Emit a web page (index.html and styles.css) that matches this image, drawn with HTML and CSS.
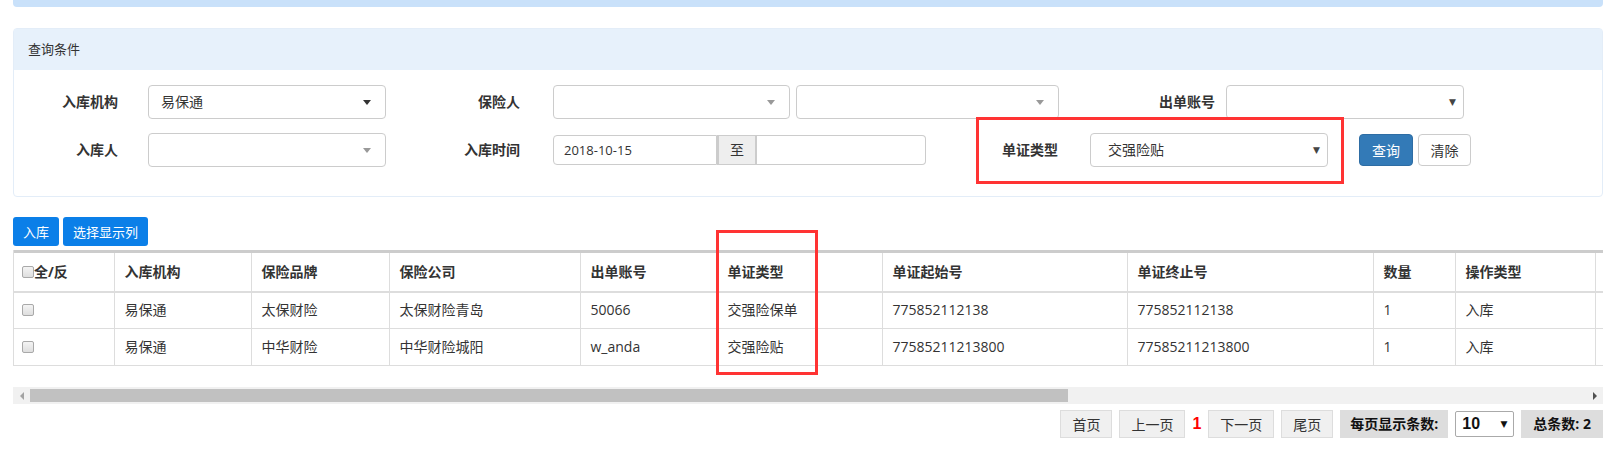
FILE: index.html
```html
<!DOCTYPE html>
<html lang="zh-CN">
<head>
    <meta charset="UTF-8">
    <title>单证入库</title>
    <link rel="stylesheet" href="styles.css">
</head>
<body>
<div class="page">
    <div class="top-bar"></div>

    <!-- 查询条件 -->
    <div class="panel">
        <div class="panel-heading">查询条件</div>
        <div class="panel-body">
            <div class="form-row">
                <label class="form-label lbl-first">入库机构</label>
                <div class="select sel-org"><span>易保通</span><i class="caret dark"></i></div>
                <label class="form-label lbl-mid">保险人</label>
                <div class="select sel-person"><span></span><i class="caret"></i></div>
                <div class="select sel-person2"><span></span><i class="caret"></i></div>
                <label class="form-label lbl-account">出单账号</label>
                <div class="select sel-account native"><span></span><i class="arrow">▼</i></div>
            </div>
            <div class="form-row">
                <label class="form-label lbl-first">入库人</label>
                <div class="select sel-org"><span></span><i class="caret"></i></div>
                <label class="form-label lbl-mid">入库时间</label>
                <div class="date-group">
                    <div class="date-input first">2018-10-15</div>
                    <div class="date-addon">至</div>
                    <div class="date-input last"></div>
                </div>
                <label class="form-label lbl-type">单证类型</label>
                <div class="select sel-type native"><span>交强险贴</span><i class="arrow">▼</i></div>
                <button class="btn btn-query">查询</button>
                <button class="btn btn-clear">清除</button>
            </div>
        </div>
    </div>

    <div class="toolbar">
        <button class="tool-btn">入库</button>
        <button class="tool-btn">选择显示列</button>
    </div>

    <div class="table-wrap">
        <table class="data-table">
            <colgroup>
                <col style="width:100px">
                <col style="width:137px">
                <col style="width:138px">
                <col style="width:191px">
                <col style="width:137px">
                <col style="width:165px">
                <col style="width:245px">
                <col style="width:246px">
                <col style="width:82px">
                <col style="width:140px">
                <col style="width:120px">
            </colgroup>
            <thead>
                <tr>
                    <th><span class="check"></span>全/反</th>
                    <th>入库机构</th>
                    <th>保险品牌</th>
                    <th>保险公司</th>
                    <th>出单账号</th>
                    <th>单证类型</th>
                    <th>单证起始号</th>
                    <th>单证终止号</th>
                    <th>数量</th>
                    <th>操作类型</th>
                    <th></th>
                </tr>
            </thead>
            <tbody>
                <tr>
                    <td><span class="check"></span></td>
                    <td>易保通</td>
                    <td>太保财险</td>
                    <td>太保财险青岛</td>
                    <td>50066</td>
                    <td>交强险保单</td>
                    <td>775852112138</td>
                    <td>775852112138</td>
                    <td>1</td>
                    <td>入库</td>
                    <td></td>
                </tr>
                <tr>
                    <td><span class="check"></span></td>
                    <td>易保通</td>
                    <td>中华财险</td>
                    <td>中华财险城阳</td>
                    <td>w_anda</td>
                    <td>交强险贴</td>
                    <td>77585211213800</td>
                    <td>77585211213800</td>
                    <td>1</td>
                    <td>入库</td>
                    <td></td>
                </tr>
            </tbody>
        </table>
    </div>

    <!-- horizontal scrollbar of the table -->
    <div class="hscroll">
        <span class="sb-arrow left"></span>
        <span class="sb-thumb"></span>
        <span class="sb-arrow right"></span>
    </div>

    <div class="pager">
        <button class="pg-btn">首页</button>
        <button class="pg-btn">上一页</button>
        <span class="pg-current">1</span>
        <button class="pg-btn">下一页</button>
        <button class="pg-btn">尾页</button>
        <span class="pg-label">每页显示条数:</span>
        <div class="pg-size"><span>10</span><i>▼</i></div>
        <span class="pg-label total">总条数: 2</span>
    </div>

    <!-- red annotation boxes -->
    <div class="mark mark-filter"></div>
    <div class="mark mark-column"></div>
</div>
</body>
</html>
```

FILE: styles.css
```css
* {
    margin: 0;
    padding: 0;
    box-sizing: border-box;
}

body {
    font-family: "Open Sans", "Noto Sans CJK SC", sans-serif;
    font-size: 14px;
    line-height: 1.4;
    color: #333;
    background: #fff;
    padding: 0 10px 0 13px;
}

.page {
    position: relative;
}

button {
    font-family: inherit;
    cursor: pointer;
}

.top-bar {
    height: 7px;
    background: #c9e1fa;
    border-radius: 0 0 4px 4px;
}

/* Panel */
.panel {
    margin-top: 21px;
    border: 1px solid #e3edf8;
    border-radius: 4px;
}

.panel-heading {
    height: 41px;
    line-height: 41px;
    padding-left: 14px;
    background: #e7f1fb;
    font-size: 13px;
}

.panel-body {
    padding: 15px 0 29px;
}

.form-row {
    display: flex;
    align-items: center;
    height: 34px;
}

.form-row + .form-row {
    margin-top: 14px;
}

.form-label {
    flex: none;
    font-weight: bold;
    text-align: right;
}

.lbl-first {
    width: 134px;
    padding-right: 30px;
}

.lbl-mid {
    width: 167px;
    padding-right: 33px;
}

.lbl-account {
    width: 167px;
    padding-right: 11px;
}

.lbl-type {
    width: 164px;
    padding-right: 32px;
}

.select {
    flex: none;
    height: 34px;
    display: flex;
    align-items: center;
    justify-content: space-between;
    padding: 0 14px 0 12px;
    border: 1px solid #ccc;
    border-radius: 4px;
    background: #fff;
}

.select.native {
    padding: 0 7px 0 17px;
}

.sel-org { width: 238px; }
.sel-person { width: 237px; }
.sel-person2 { width: 263px; margin-left: 6px; }
.sel-account { width: 238px; }
.sel-type { width: 238px; }

.caret {
    width: 0;
    height: 0;
    border-top: 5px solid #999;
    border-left: 4px solid transparent;
    border-right: 4px solid transparent;
}

.caret.dark {
    border-top-color: #333;
}

.arrow {
    font-style: normal;
    font-size: 9px;
    color: #444;
    font-family: "DejaVu Sans", sans-serif;
}

.date-group {
    flex: none;
    display: flex;
    width: 373px;
    height: 30px;
}

.date-input {
    border: 1px solid #ccc;
    font-size: 13px;
    line-height: 28px;
    padding-left: 10px;
}

.date-input.first {
    width: 164px;
    border-radius: 4px 0 0 4px;
}

.date-input.last {
    flex: 1;
    border-left: none;
    border-radius: 0 4px 4px 0;
}

.date-addon {
    width: 40px;
    background: #eee;
    border: 1px solid #ccc;
    border-left: 2px solid #ccc;
    border-right: 2px solid #ccc;
    text-align: center;
    line-height: 28px;
}

.btn {
    flex: none;
    height: 32px;
    width: 54px;
    font-size: 14px;
    border-radius: 4px;
}

.btn-query {
    margin-left: 31px;
    background: #337ab7;
    border: 1px solid #2e6da4;
    color: #fff;
}

.btn-clear {
    margin-left: 5px;
    width: 53px;
    background: #fff;
    border: 1px solid #ccc;
    color: #333;
}

/* Toolbar */
.toolbar {
    display: flex;
    gap: 4px;
    margin-top: 20px;
}

.tool-btn {
    height: 29px;
    padding: 0 10px;
    border: none;
    border-radius: 3px;
    background: #0b7fe8;
    color: #fff;
    font-size: 13px;
}

/* Table */
.table-wrap {
    margin-top: 4px;
    overflow: hidden;
    border-left: 1px solid #ddd;
}

.data-table {
    border-collapse: collapse;
    table-layout: fixed;
    width: 1701px;
}

.data-table th,
.data-table td {
    text-align: left;
    padding: 0 10px;
    border-right: 1px solid #ddd;
    white-space: nowrap;
    overflow: hidden;
}

.data-table th {
    height: 40px;
    border-top: 3px solid #ccc;
    border-bottom: 2px solid #ddd;
    font-weight: bold;
}

.data-table td {
    height: 37px;
    border-bottom: 1px solid #ddd;
}

.data-table th:first-child,
.data-table td:first-child {
    padding-left: 8px;
}

.check {
    display: inline-block;
    width: 12px;
    height: 12px;
    border: 1px solid #a9a9a9;
    border-radius: 2px;
    background: linear-gradient(#f4f4f4, #dedede);
    vertical-align: -1px;
}

/* fake scrollbar */
.hscroll {
    display: flex;
    align-items: center;
    height: 17px;
    margin-top: 21px;
    background: #f1f1f1;
}

.sb-arrow {
    width: 17px;
    height: 17px;
    display: flex;
    align-items: center;
    justify-content: center;
}

.sb-arrow::before {
    content: "";
    border-top: 4px solid transparent;
    border-bottom: 4px solid transparent;
}

.sb-arrow.left::before {
    border-right: 4px solid #a3a3a3;
}

.sb-arrow.right {
    margin-left: auto;
}

.sb-arrow.right::before {
    border-left: 4px solid #505050;
}

.sb-thumb {
    width: 1038px;
    height: 13px;
    background: #c1c1c1;
}

/* Pager */
.pager {
    display: flex;
    justify-content: flex-end;
    align-items: center;
    gap: 7px;
    margin-top: 6px;
    height: 28px;
}

.pg-btn {
    height: 28px;
    padding: 0 11px;
    background: #f0f0f0;
    border: 1px solid #ddd;
    color: #333;
    font-size: 14px;
}

.pg-current {
    color: #f00;
    font-weight: bold;
    font-family: "Liberation Sans", sans-serif;
    font-size: 16px;
}

.pg-label {
    height: 28px;
    line-height: 28px;
    padding: 0 10px;
    background: #ddd;
    font-weight: bold;
    font-size: 14px;
    color: #111;
}

.pg-label.total {
    padding: 0 12px;
}

.pg-size {
    display: flex;
    align-items: center;
    justify-content: space-between;
    width: 59px;
    height: 26px;
    padding: 0 6px;
    border: 1px solid #aaa;
    border-radius: 2px;
    font-family: "Liberation Sans", sans-serif;
    font-weight: bold;
    font-size: 16px;
    color: #111;
}

.pg-size i {
    font-style: normal;
    font-size: 9px;
    font-family: "DejaVu Sans", sans-serif;
}

/* annotation boxes */
.mark {
    position: absolute;
    border: 3px solid #f33;
}

.mark-filter {
    left: 963px;
    top: 117px;
    width: 368px;
    height: 67px;
}

.mark-column {
    left: 703px;
    top: 230px;
    width: 102px;
    height: 145px;
}
```
